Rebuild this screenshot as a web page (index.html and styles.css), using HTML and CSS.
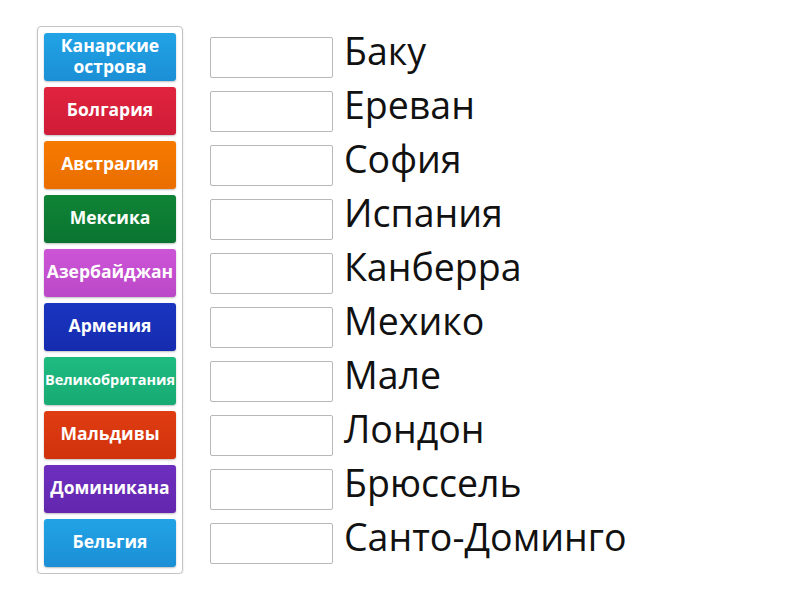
FILE: index.html
```html
<!DOCTYPE html>
<html lang="ru">
<head>
    <meta charset="UTF-8">
    <title>Столицы</title>
    <link rel="stylesheet" href="styles.css">
</head>
<body>
    <div class="board">
        <div class="tiles">
            <div class="tile c1">Канарские острова</div>
            <div class="tile c2">Болгария</div>
            <div class="tile c3">Австралия</div>
            <div class="tile c4">Мексика</div>
            <div class="tile c5">Азербайджан</div>
            <div class="tile c6">Армения</div>
            <div class="tile c7 small">Великобритания</div>
            <div class="tile c8">Мальдивы</div>
            <div class="tile c9">Доминикана</div>
            <div class="tile c1">Бельгия</div>
        </div>
        <div class="targets">
            <div class="row"><div class="slot"></div><span class="label">Баку</span></div>
            <div class="row"><div class="slot"></div><span class="label">Ереван</span></div>
            <div class="row"><div class="slot"></div><span class="label">София</span></div>
            <div class="row"><div class="slot"></div><span class="label">Испания</span></div>
            <div class="row"><div class="slot"></div><span class="label">Канберра</span></div>
            <div class="row"><div class="slot"></div><span class="label">Мехико</span></div>
            <div class="row"><div class="slot"></div><span class="label">Мале</span></div>
            <div class="row"><div class="slot"></div><span class="label">Лондон</span></div>
            <div class="row"><div class="slot"></div><span class="label">Брюссель</span></div>
            <div class="row"><div class="slot"></div><span class="label">Санто-Доминго</span></div>
        </div>
    </div>
</body>
</html>
```

FILE: styles.css
```css
body {
    margin: 0;
    padding: 0;
    background-color: #ffffff;
    font-family: "Open Sans", sans-serif;
}

.board {
    display: flex;
    align-items: flex-start;
    gap: 27px;
    padding: 26px 0 0 37px;
}

.tiles {
    display: flex;
    flex-direction: column;
    gap: 6px;
    width: 132px;
    padding: 6px;
    border: 1px solid #c4c4c4;
    border-radius: 4px;
    box-shadow: 0 1px 2px rgba(0, 0, 0, 0.15);
}

.tile {
    box-sizing: border-box;
    height: 48px;
    padding-bottom: 3px;
    display: flex;
    align-items: center;
    justify-content: center;
    text-align: center;
    color: #ffffff;
    font-weight: bold;
    font-size: 17.5px;
    line-height: 21px;
    border-radius: 3px;
    box-shadow: 0 1px 2px rgba(0, 0, 0, 0.25);
    white-space: nowrap;
}

.tile.c1:first-child {
    white-space: normal;
}

.tile.small {
    font-size: 14.5px;
}

.c1 { background: linear-gradient(#22a3e6, #1b8fd6); }
.c2 { background: linear-gradient(#e0243f, #cf1c37); }
.c3 { background: linear-gradient(#f67a00, #ea6e00); }
.c4 { background: linear-gradient(#0f8436, #0b7430); }
.c5 { background: linear-gradient(#cc55d6, #bb48c8); }
.c6 { background: linear-gradient(#1b35c0, #152caf); }
.c7 { background: linear-gradient(#1ebb80, #18aa73); }
.c8 { background: linear-gradient(#e03c12, #d0320c); }
.c9 { background: linear-gradient(#6e2fbf, #6227ae); }

.targets {
    display: flex;
    flex-direction: column;
    gap: 6px;
    padding-top: 7px;
}

.row {
    height: 48px;
    display: flex;
    align-items: center;
    gap: 11px;
}

.slot {
    width: 121px;
    height: 39px;
    border: 1px solid #b8b8b8;
    border-radius: 2px;
    background-color: #ffffff;
}

.label {
    font-size: 37.5px;
    color: #111111;
    line-height: 40px;
    margin-top: -12px;
}
```
